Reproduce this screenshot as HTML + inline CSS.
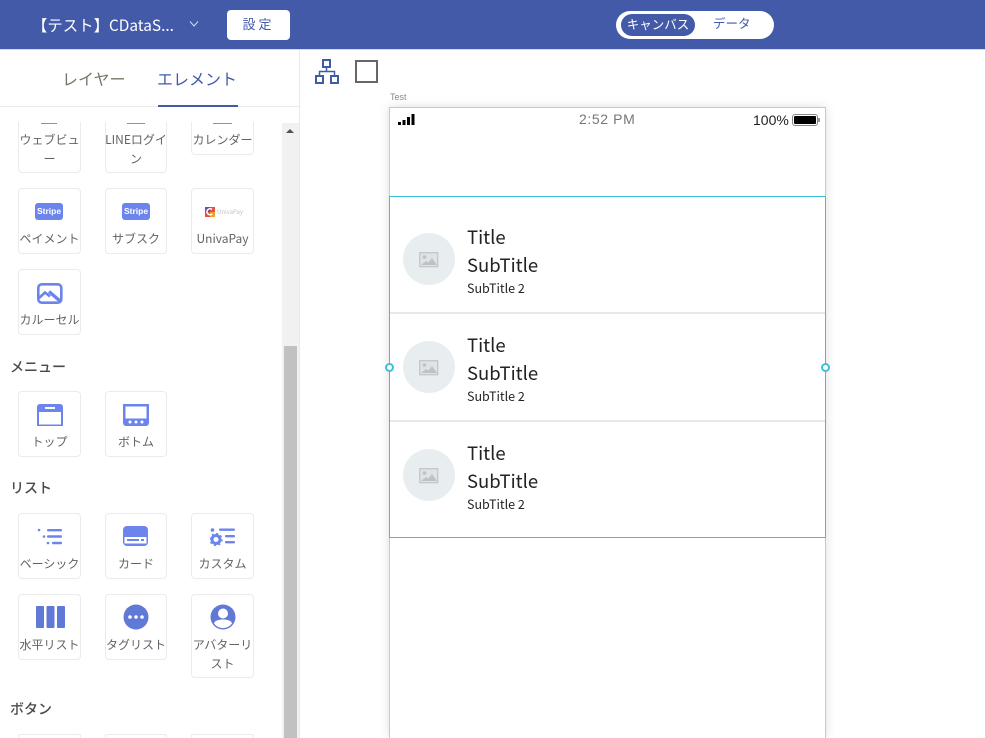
<!DOCTYPE html>
<html><head><meta charset="utf-8">
<style>
*{box-sizing:border-box}
html,body{margin:0;padding:0;width:985px;height:738px;overflow:hidden;background:#fff}
body{position:relative;font-family:"Liberation Sans","Noto Sans CJK JP",sans-serif}
.a{position:absolute}
.n{font-family:"Noto Sans CJK JP",sans-serif}
.t{position:absolute;white-space:nowrap;line-height:1}
.card{position:absolute;border:1px solid #ebebeb;border-radius:4px;background:#fff;text-align:center;font-family:"Noto Sans CJK JP",sans-serif;font-size:12px;color:#5f6368;line-height:19px;overflow:hidden}
.card span{position:absolute;left:-6px;right:-6px;text-align:center;white-space:nowrap}
.card svg{position:absolute}
.h{position:absolute;left:10px;font-family:"Noto Sans CJK JP",sans-serif;font-size:14px;font-weight:500;color:#4a4a4a;line-height:20px}
.row{position:absolute;left:390px;width:435px;height:108px;border-bottom:2px solid #e8e8e8}
.av{position:absolute;left:13px;top:27px;width:52px;height:52px;border-radius:50%;background:#e8edef}
.l{position:absolute;left:77px;font-family:"Noto Sans CJK JP",sans-serif;color:#222;white-space:nowrap;line-height:24px}
.l1{font-size:18.500px}
.l2{font-size:12.500px;top:70px}
.stripe{position:absolute;left:16px;top:14px;width:28px;height:17px;background:#6b85ec;border-radius:3px;color:#fff;font:bold 8.500px/17px "Liberation Sans",sans-serif}
</style></head><body>

<div class="a" style="left:0;top:0;width:985px;height:50px;background:#435aa9;border-bottom:1px solid #d5dae8"></div>
<div class="t n" style="left:32px;top:18px;font-size:15.400px;color:#fff">【テスト】CDataS...</div>
<svg class="a" style="left:188px;top:20px" width="12" height="9" viewBox="0 0 12 9"><path d="M2 1.500L6 6L10 1.500" fill="none" stroke="#d5dbef" stroke-width="1"/></svg>
<div class="a n" style="left:227px;top:10px;width:63px;height:30px;background:#fff;border-radius:4px;color:#435aa9;font-size:13px;line-height:28px;text-align:center;letter-spacing:3px">設定</div>
<div class="a" style="left:616px;top:11px;width:158px;height:28px;background:#fff;border-radius:14px"></div>
<div class="a n" style="left:621px;top:14px;width:74px;height:22px;background:#435aa9;border-radius:11px;color:#fff;font-size:12.500px;line-height:20px;text-align:center">キャンバス</div>
<div class="t n" style="left:713px;top:17px;font-size:12.500px;color:#435aa9">データ</div>

<div class="a" style="left:299px;top:50px;width:1px;height:688px;background:#e9e9e9"></div>
<div class="t n" style="left:62px;top:70px;font-size:16px;color:#7a7468">レイヤー</div>
<div class="t n" style="left:157px;top:70px;font-size:16px;color:#435aa9">エレメント</div>
<div class="a" style="left:0;top:106px;width:299px;height:1px;background:#e9e9e9"></div>
<div class="a" style="left:158px;top:105px;width:80px;height:2px;background:#435aa9"></div>

<div class="a" style="left:282px;top:123px;width:17px;height:615px;background:#f1f1f1"></div>
<div class="a" style="left:284px;top:346px;width:13px;height:392px;background:#c1c1c1"></div>
<svg class="a" style="left:286px;top:128px" width="8" height="6"><path d="M4 1L8 5H0Z" fill="#505050"/></svg>

<div class="a" style="left:0;top:122px;width:282px;height:616px;overflow:hidden">
 <div class="a" style="left:0;top:-122px;width:282px;height:738px;overflow:hidden">
  <div class="card" style="left:18px;top:100px;width:63px;height:73px"><span style="top:29px">ウェブビュ<br>ー</span></div>
  <div class="a" style="left:41px;top:123px;width:16px;height:1px;background:#7b8fe8"></div>
  <div class="card" style="left:105px;top:100px;width:62px;height:73px"><span style="top:29px">LINEログイ<br>ン</span></div>
  <div class="a" style="left:127px;top:123px;width:18px;height:1px;background:#7b8fe8"></div>
  <div class="card" style="left:191px;top:100px;width:63px;height:55px"><span style="top:29px">カレンダー</span></div>
  <div class="a" style="left:213px;top:123px;width:19px;height:1px;background:#7b8fe8"></div>

  <div class="card" style="left:18px;top:188px;width:63px;height:66px">
   <div class="stripe">Stripe</div>
   <span style="top:40px">ペイメント</span></div>
  <div class="card" style="left:105px;top:188px;width:62px;height:66px">
   <div class="stripe">Stripe</div>
   <span style="top:40px">サブスク</span></div>
  <div class="card" style="left:191px;top:188px;width:63px;height:66px">
   <svg style="left:13px;top:18px" width="10" height="10" viewBox="0 0 10 10"><rect width="10" height="10" fill="#e2503f"/><rect x="0" width="5" height="5" fill="#6a4fa3"/><rect x="5" y="5" width="5" height="5" fill="#f0a030"/><path d="M7 2.500A3 3 0 1 0 7 7" fill="none" stroke="#fff" stroke-width="1.600"/></svg>
   <div class="t" style="left:25px;top:20px;font-size:6px;color:#c4c4c4">UnivaPay</div>
   <span style="top:40px">UnivaPay</span></div>

  <div class="card" style="left:18px;top:269px;width:63px;height:66px">
   <svg style="left:18px;top:13px" width="26" height="21" viewBox="0 0 26 21"><rect x="1.300" y="1.300" width="23" height="18.400" rx="3.500" fill="none" stroke="#6b85ec" stroke-width="2.600"/><path d="M2 15L8 9.500L13 13.500" fill="none" stroke="#6b85ec" stroke-width="2.600"/><path d="M12 8.500L23 18" fill="none" stroke="#6b85ec" stroke-width="3.400"/></svg>
   <span style="top:40px">カルーセル</span></div>

  <div class="h" style="top:357px">メニュー</div>
  <div class="card" style="left:18px;top:391px;width:63px;height:66px">
   <svg style="left:18px;top:12px" width="26" height="23" viewBox="0 0 26 23"><path d="M3 0H23A3 3 0 0 1 26 3V22H0V3A3 3 0 0 1 3 0Z" fill="#6b85ec"/><rect x="2" y="8" width="22" height="12.500" fill="#fff"/><rect x="8" y="3" width="10" height="2" fill="#fff"/></svg>
   <span style="top:40px">トップ</span></div>
  <div class="card" style="left:105px;top:391px;width:62px;height:66px">
   <svg style="left:17px;top:12px" width="26" height="23" viewBox="0 0 26 23"><path d="M0 0H26V19A3 3 0 0 1 23 22H3A3 3 0 0 1 0 19Z" fill="#6b85ec"/><rect x="2.500" y="2.500" width="21" height="12" fill="#fff"/><circle cx="7" cy="18" r="1.500" fill="#fff"/><circle cx="13" cy="18" r="1.500" fill="#fff"/><circle cx="19" cy="18" r="1.500" fill="#fff"/></svg>
   <span style="top:40px">ボトム</span></div>

  <div class="h" style="top:478px">リスト</div>
  <div class="card" style="left:18px;top:513px;width:63px;height:66px">
   <svg style="left:18px;top:14px" width="26" height="18" viewBox="0 0 26 18"><circle cx="2" cy="2" r="1.300" fill="#6b85ec"/><rect x="10" y="1" width="15" height="2.400" rx="1" fill="#6b85ec"/><circle cx="7" cy="8.500" r="1.300" fill="#6b85ec"/><rect x="10" y="7.300" width="15" height="2.400" rx="1" fill="#6b85ec"/><circle cx="11" cy="15" r="1.300" fill="#6b85ec"/><rect x="15" y="13.800" width="10" height="2.400" rx="1" fill="#6b85ec"/></svg>
   <span style="top:40px">ベーシック</span></div>
  <div class="card" style="left:105px;top:513px;width:62px;height:66px">
   <svg style="left:17px;top:12px" width="26" height="21" viewBox="0 0 26 21"><rect width="25" height="20" rx="4" fill="#6b85ec"/><rect x="1.500" y="11" width="22" height="6.500" fill="#fff"/><rect x="4" y="13" width="12" height="2" fill="#6b85ec"/><rect x="18" y="13" width="3" height="2" fill="#6b85ec"/></svg>
   <span style="top:40px">カード</span></div>
  <div class="card" style="left:191px;top:513px;width:63px;height:66px">
   <svg style="left:18px;top:13px" width="26" height="20" viewBox="0 0 26 20"><circle cx="2.500" cy="3" r="1.800" fill="#6b85ec"/><rect x="9" y="1.500" width="16" height="2.400" rx="1" fill="#6b85ec"/><circle cx="6" cy="12.500" r="4" fill="none" stroke="#6b85ec" stroke-width="3"/><circle cx="6" cy="12.500" r="6" fill="none" stroke="#6b85ec" stroke-width="1.300" stroke-dasharray="2 2.700"/><rect x="15" y="8" width="10" height="2.400" rx="1" fill="#6b85ec"/><rect x="15" y="14" width="10" height="2.400" rx="1" fill="#6b85ec"/></svg>
   <span style="top:40px">カスタム</span></div>

  <div class="card" style="left:18px;top:594px;width:63px;height:66px">
   <svg style="left:17px;top:11px" width="29" height="23" viewBox="0 0 29 23"><rect width="8" height="22" rx="1" fill="#6079d6"/><rect x="10.500" width="8" height="22" rx="1" fill="#6079d6"/><rect x="21" width="8" height="22" rx="1" fill="#6079d6"/></svg>
   <span style="top:40px">水平リスト</span></div>
  <div class="card" style="left:105px;top:594px;width:62px;height:66px">
   <svg style="left:17px;top:9px" width="26" height="26" viewBox="0 0 26 26"><circle cx="13" cy="13" r="12.500" fill="#6079d6"/><circle cx="7" cy="13" r="1.800" fill="#fff"/><circle cx="13" cy="13" r="1.800" fill="#fff"/><circle cx="19" cy="13" r="1.800" fill="#fff"/></svg>
   <span style="top:40px">タグリスト</span></div>
  <div class="card" style="left:191px;top:594px;width:63px;height:84px">
   <svg style="left:18px;top:9px" width="26" height="26" viewBox="0 0 26 26"><circle cx="13" cy="13" r="12.500" fill="#6079d6"/><circle cx="13" cy="9.500" r="5" fill="#fff"/><path d="M4 19.500C4.500 16.500 9 15.500 13 15.500S21.500 16.500 22 19.500A11 11 0 0 1 4 19.500Z" fill="#fff"/></svg>
   <span style="top:40px">アバターリ<br>スト</span></div>

  <div class="h" style="top:699px">ボタン</div>
  <div class="card" style="left:18px;top:734px;width:63px;height:4px;border-bottom:0"></div>
  <div class="card" style="left:105px;top:734px;width:62px;height:4px;border-bottom:0"></div>
  <div class="card" style="left:191px;top:734px;width:63px;height:4px;border-bottom:0"></div>
 </div>
</div>

<svg class="a" style="left:315px;top:59px" width="24" height="25" viewBox="0 0 24 25"><g fill="none" stroke="#435aa9" stroke-width="2"><rect x="8" y="1" width="7" height="7"/><rect x="1" y="17" width="7" height="7"/><rect x="16" y="17" width="7" height="7"/><path d="M11.500 8V12.500M4.500 17V12.500H19.500V17" stroke-width="1.500"/></g></svg>
<div class="a" style="left:355px;top:60px;width:23px;height:23px;border:2px solid #666"></div>
<div class="t" style="left:390px;top:93px;font-size:9px;color:#8a8a8a">Test</div>

<div class="a" style="left:389px;top:107px;width:437px;height:631px;background:#fff;border:1px solid #c9c9c9;border-bottom:0;box-shadow:0 0 10px rgba(0,0,0,.13)"></div>
<svg class="a" style="left:398px;top:113px" width="18" height="12"><rect x="0" y="9" width="3" height="3" fill="#000"/><rect x="4.500" y="7" width="3" height="5" fill="#000"/><rect x="9" y="4" width="3" height="8" fill="#000"/><rect x="13.500" y="1" width="3" height="11" fill="#000"/></svg>
<div class="t" style="left:579px;top:112px;font-size:14px;color:#777;letter-spacing:.6px">2:52 PM</div>
<div class="t" style="left:753px;top:113px;font-size:14px;color:#222">100%</div>
<div class="a" style="left:792px;top:114px;width:26px;height:12px;border:1px solid #888;border-radius:3px;padding:1px"><div style="width:100%;height:100%;background:#000;border-radius:1px"></div></div>
<div class="a" style="left:818px;top:118px;width:2px;height:4px;background:#999"></div>

<div class="row" style="top:206px"><div class="av"></div><svg class="a" style="left:29px;top:46px" width="20" height="16" viewBox="0 0 20 16"><rect x=".7" y=".7" width="18" height="14" fill="#dfe3e5" stroke="#c3c6c8" stroke-width="1.300"/><circle cx="5.500" cy="5" r="1.800" fill="#bfc2c4"/><path d="M2 13L7 9L9.500 10.500L13 6L18 13Z" fill="#bfc2c4"/></svg>
 <div class="l l1" style="top:19px">Title</div><div class="l l1" style="top:47px">SubTitle</div><div class="l l2">SubTitle 2</div></div>
<div class="row" style="top:314px"><div class="av"></div><svg class="a" style="left:29px;top:46px" width="20" height="16" viewBox="0 0 20 16"><rect x=".7" y=".7" width="18" height="14" fill="#dfe3e5" stroke="#c3c6c8" stroke-width="1.300"/><circle cx="5.500" cy="5" r="1.800" fill="#bfc2c4"/><path d="M2 13L7 9L9.500 10.500L13 6L18 13Z" fill="#bfc2c4"/></svg>
 <div class="l l1" style="top:19px">Title</div><div class="l l1" style="top:47px">SubTitle</div><div class="l l2">SubTitle 2</div></div>
<div class="row" style="top:422px;border-bottom:0"><div class="av"></div><svg class="a" style="left:29px;top:46px" width="20" height="16" viewBox="0 0 20 16"><rect x=".7" y=".7" width="18" height="14" fill="#dfe3e5" stroke="#c3c6c8" stroke-width="1.300"/><circle cx="5.500" cy="5" r="1.800" fill="#bfc2c4"/><path d="M2 13L7 9L9.500 10.500L13 6L18 13Z" fill="#bfc2c4"/></svg>
 <div class="l l1" style="top:19px">Title</div><div class="l l1" style="top:47px">SubTitle</div><div class="l l2">SubTitle 2</div></div>

<div class="a" style="left:389px;top:196px;width:437px;height:342px;border:1px solid #3cc0d8"></div>
<div class="a" style="left:385px;top:362.500px;width:9px;height:9px;border:2px solid #3cc0d8;border-radius:50%;background:#fff"></div>
<div class="a" style="left:821px;top:362.500px;width:9px;height:9px;border:2px solid #3cc0d8;border-radius:50%;background:#fff"></div>
</body></html>
